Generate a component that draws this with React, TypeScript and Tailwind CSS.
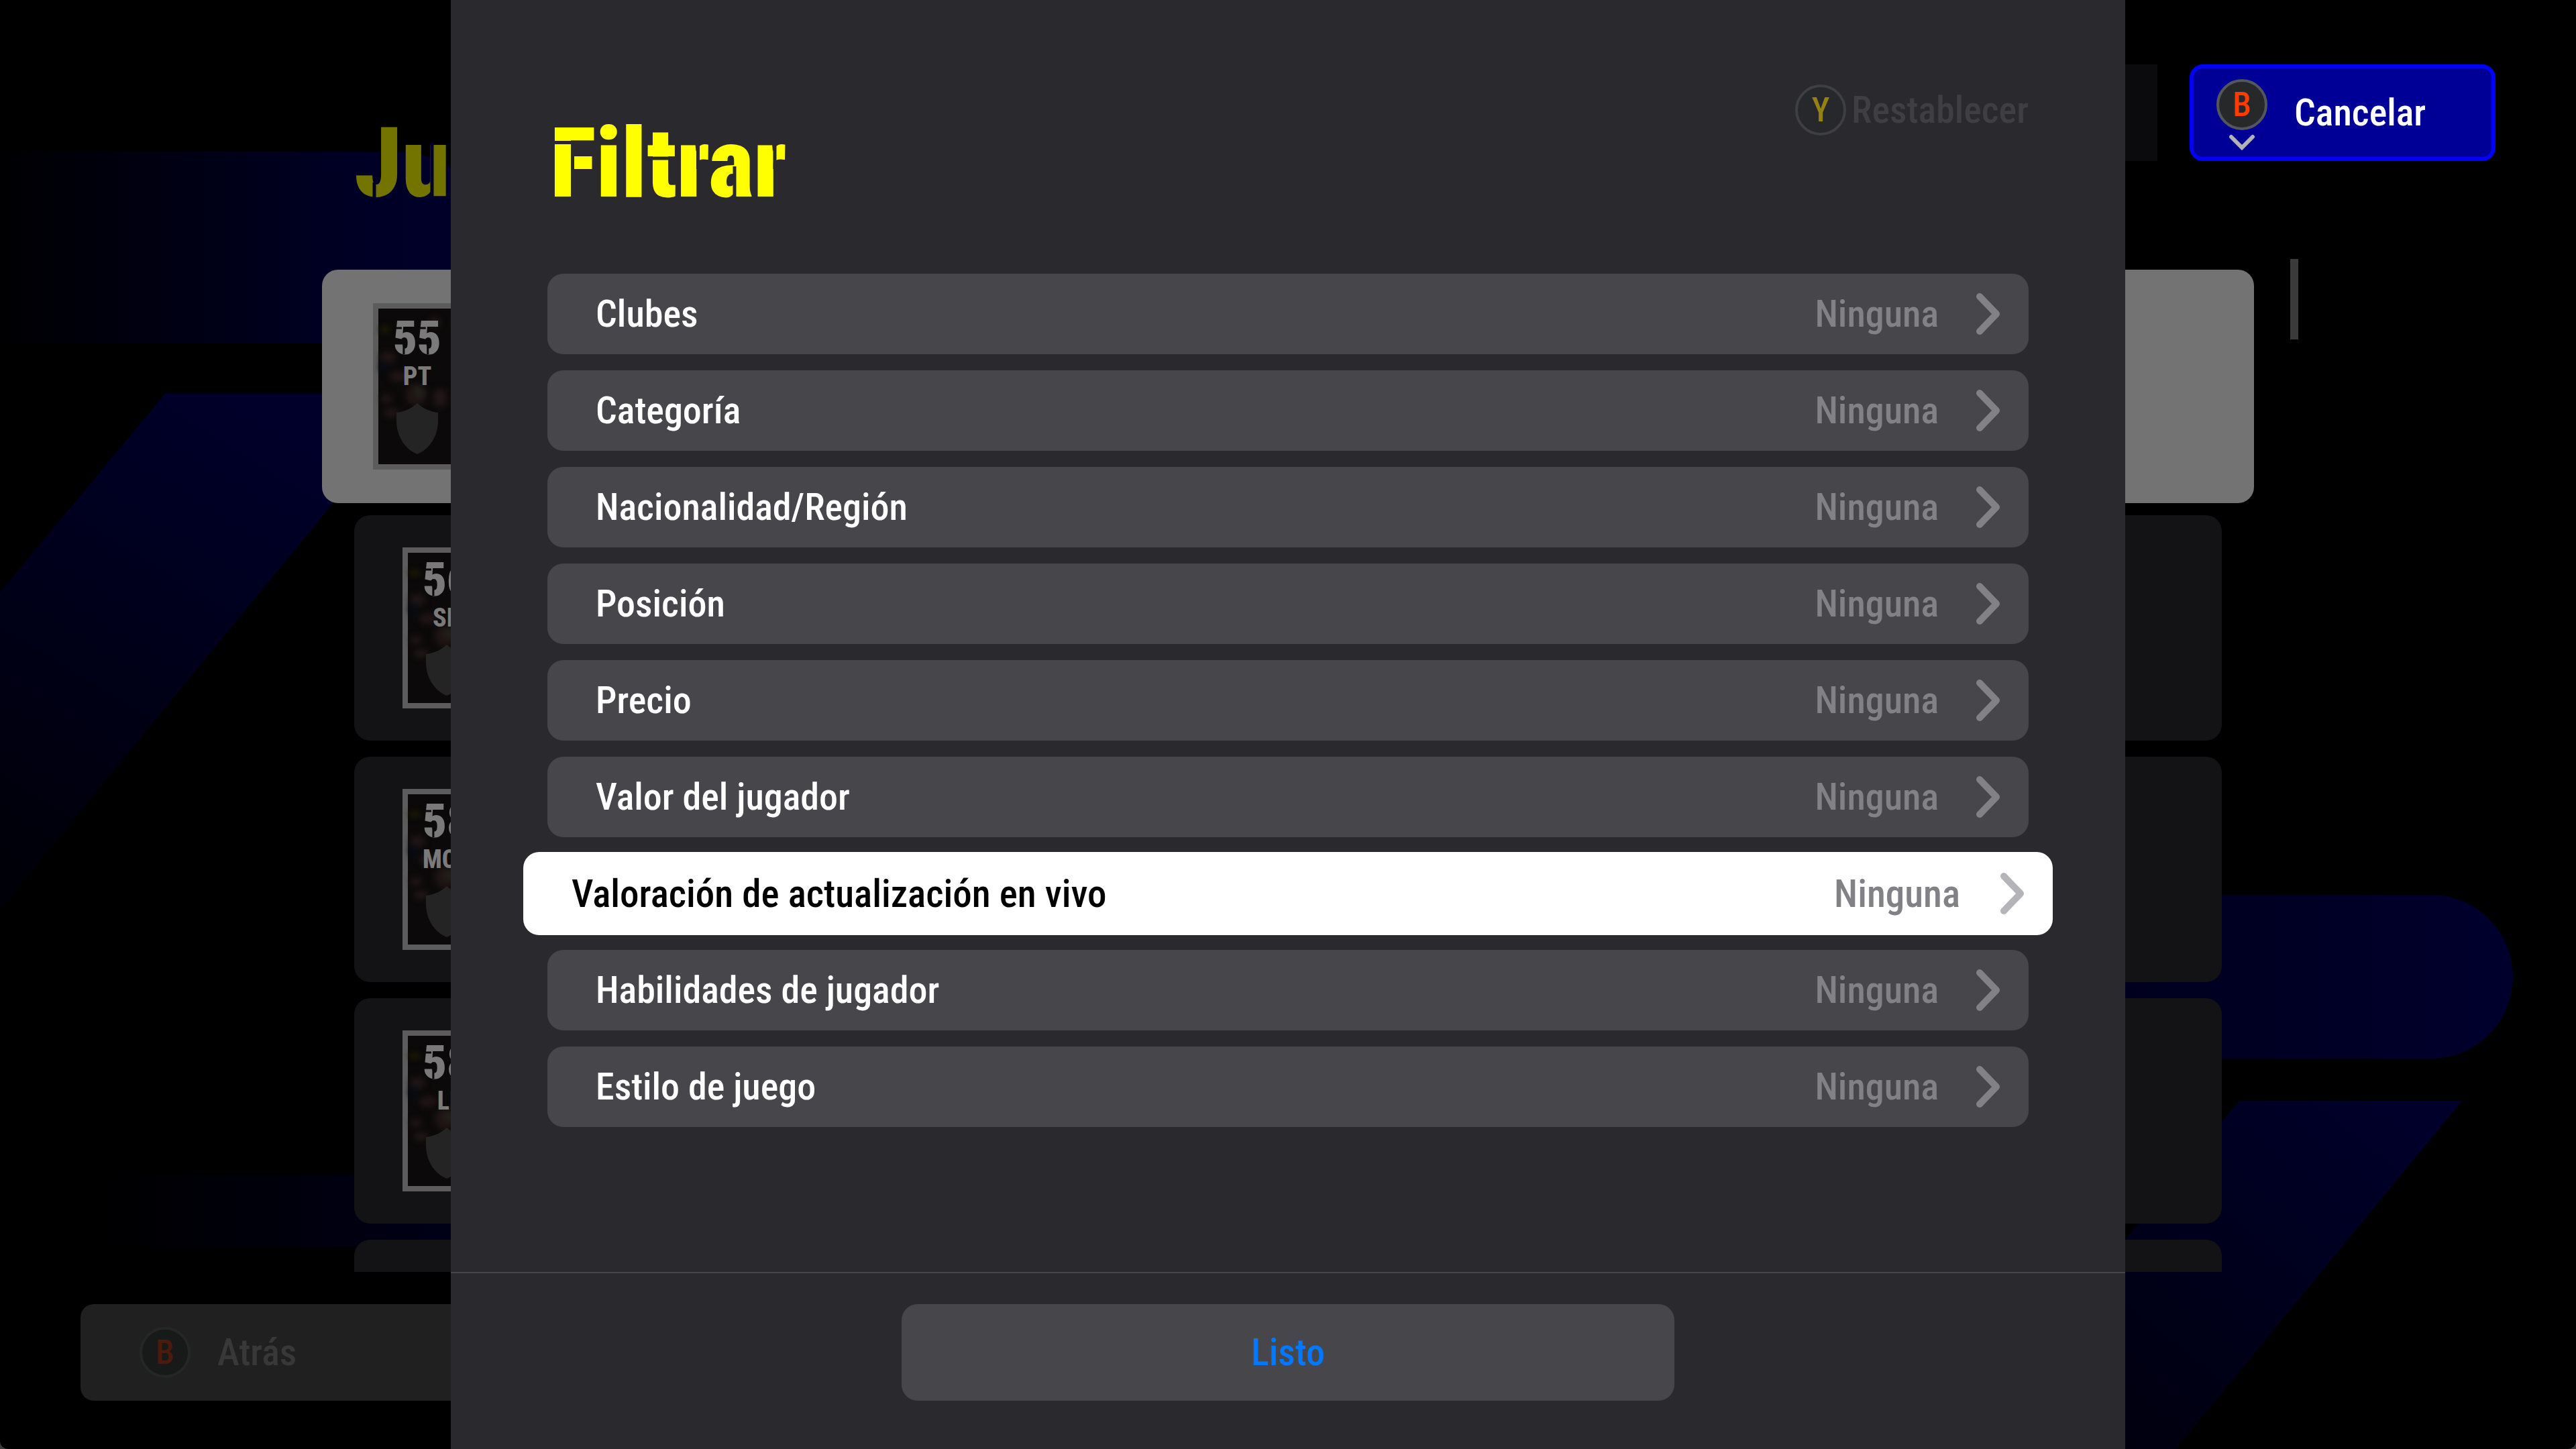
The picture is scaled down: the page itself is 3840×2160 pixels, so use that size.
import type { ReactNode } from "react";

type Filter = { label: string; value: string; selected?: boolean };
type Player = { rating: string; position: string; selected?: boolean };

const filters: Filter[] = [
  { label: "Clubes", value: "Ninguna" },
  { label: "Categoría", value: "Ninguna" },
  { label: "Nacionalidad/Región", value: "Ninguna" },
  { label: "Posición", value: "Ninguna" },
  { label: "Precio", value: "Ninguna" },
  { label: "Valor del jugador", value: "Ninguna" },
  { label: "Valoración de actualización en vivo", value: "Ninguna", selected: true },
  { label: "Habilidades de jugador", value: "Ninguna" },
  { label: "Estilo de juego", value: "Ninguna" },
];

const players: Player[] = [
  { rating: "55", position: "PT", selected: true },
  { rating: "56", position: "SD" },
  { rating: "58", position: "MCD" },
  { rating: "58", position: "LI" },
];

function Backdrop() {
  return (
    <svg
      aria-hidden="true"
      className="absolute inset-0 h-full w-full"
      viewBox="0 0 3840 2160"
      preserveAspectRatio="none"
    >
      <defs>
        <linearGradient id="bandTop" x1="0" x2="1" y1="0" y2="0">
          <stop offset="0" stopColor="#000002" />
          <stop offset="0.75" stopColor="#000026" />
          <stop offset="1" stopColor="#00002c" />
        </linearGradient>
        <linearGradient id="bandBottom" gradientUnits="userSpaceOnUse" x1="140" x2="1100" y1="0" y2="0">
          <stop offset="0" stopColor="#000000" />
          <stop offset="1" stopColor="#00002a" />
        </linearGradient>
        <linearGradient id="slantLeft" gradientUnits="userSpaceOnUse" x1="420" x2="0" y1="620" y2="1300">
          <stop offset="0" stopColor="#00002b" />
          <stop offset="1" stopColor="#000008" />
        </linearGradient>
        <linearGradient id="pillRight" gradientUnits="userSpaceOnUse" x1="3100" x2="3746" y1="0" y2="0">
          <stop offset="0" stopColor="#00001c" />
          <stop offset="1" stopColor="#00002d" />
        </linearGradient>
        <linearGradient id="slantRight" gradientUnits="userSpaceOnUse" x1="3560" x2="3160" y1="1660" y2="2160">
          <stop offset="0" stopColor="#00002a" />
          <stop offset="1" stopColor="#00000e" />
        </linearGradient>
      </defs>
      <path d="M0 226H592a143 143 0 0 1 0 286H0Z" fill="url(#bandTop)" />
      <path d="M247 586H631L0 1355V883Z" fill="url(#slantLeft)" />
      <path d="M140 1752H1000V1858H140Z" fill="url(#bandBottom)" />
      <path d="M3000 1334H3624a122 122 0 0 1 0 244H3000Z" fill="url(#pillRight)" />
      <path d="M3338 1641H3670L3243 2160H2911Z" fill="url(#slantRight)" />
    </svg>
  );
}

/* Thin gaps laid over heavy lettering to give it a stencil look. */
function StencilCuts({ d, box, tone }: { d: string; box: string; tone: string }) {
  return (
    <svg aria-hidden="true" className={`absolute top-0 left-0 h-full w-full ${tone}`} viewBox={box} preserveAspectRatio="xMinYMin meet" fill="none" stroke="currentColor">
      <path d={d} />
    </svg>
  );
}

function PadKey({ tone, children }: { tone: string; children: ReactNode }) {
  return (
    <span
      className={`flex size-19 shrink-0 items-center justify-center rounded-full border-4 text-[50px] leading-none font-medium ${tone}`}
    >
      {children}
    </span>
  );
}

function Shield() {
  return (
    <svg aria-hidden="true" className="mt-[26px] h-19 w-16" viewBox="0 0 64 76">
      <path d="M32 0C23 8 12 13 1 14V27C1 49 14 69 32 76C50 69 63 49 63 27V14C52 13 41 8 32 0Z" fill="#242424" />
    </svg>
  );
}

function CardArt({ player }: { player: Player }) {
  return (
    <div className="relative h-full w-[180px] border-8 border-[#5c5c5c] bg-[#0b0909]">
      <svg aria-hidden="true" className="absolute inset-0 h-full w-full blur-[4px]" viewBox="0 0 164 224" preserveAspectRatio="none">
        <g fill="#1f1514">
          <ellipse cx="14" cy="70" rx="12" ry="9" />
          <ellipse cx="30" cy="98" rx="14" ry="8" />
          <ellipse cx="56" cy="124" rx="16" ry="16" />
          <ellipse cx="12" cy="130" rx="9" ry="7" />
          <ellipse cx="92" cy="128" rx="11" ry="14" />
          <ellipse cx="84" cy="20" rx="10" ry="8" />
          <ellipse cx="20" cy="150" rx="12" ry="7" />
        </g>
        <ellipse cx="10" cy="30" rx="9" ry="5" fill="#191904" />
        <ellipse cx="62" cy="120" rx="8" ry="9" fill="#20201a" />
        <ellipse cx="8" cy="84" rx="7" ry="9" fill="#070b14" />
      </svg>
      <div className={`relative flex w-29 flex-col items-center text-[#7a7a7a] ${player.selected ? "pt-5" : "pt-4"}`}>
        <span className="relative text-[70px] leading-[48px] font-black">
          {player.rating}
          <StencilCuts
            box="0 0 72 48"
            tone="stroke-3 text-[#0b0909]"
            d={player.rating === "55" ? "M0 9H13M16 37V50M36 9H49M52 37V50" : "M0 9H13M16 37V50"}
          />
        </span>
        <span className="mt-[19px] text-[38px] leading-[28px] font-extrabold">{player.position}</span>
        <Shield />
      </div>
    </div>
  );
}

function PlayerRow({ player }: { player: Player }) {
  return player.selected ? (
    <li className="-my-1.5 h-[348px] shrink-0 rounded-3xl bg-[#737373] py-[50px] pl-19">
      <CardArt player={player} />
    </li>
  ) : (
    <li className="mx-12 h-84 shrink-0 rounded-3xl bg-[#131315] py-12 pl-18">
      <CardArt player={player} />
    </li>
  );
}

function FilterRow({ filter }: { filter: Filter }) {
  const box = filter.selected
    ? "-mx-9 -my-0.5 w-[calc(100%+72px)] h-31 bg-white text-black text-[57px]"
    : "w-full h-30 bg-[#47464b] text-white text-[56px]";
  return (
    <li>
      <button type="button" className={`flex items-center justify-between rounded-3xl pr-[42px] pl-18 leading-none font-medium ${box}`}>
        <span>{filter.label}</span>
        <span className={`flex items-center text-[#828286] ${filter.selected ? "gap-15" : "gap-14"}`}>
          {filter.value}
          <svg
            aria-hidden="true"
            className={filter.selected ? "h-16 w-9 text-[#b5b5b9]" : "h-16 w-9"}
            viewBox="0 0 36 64"
            fill="none"
            stroke="currentColor"
            strokeWidth="10"
            strokeLinecap="round"
            strokeLinejoin="round"
          >
            <path d="M5 6L30 32L5 58" />
          </svg>
        </span>
      </button>
    </li>
  );
}

export default function App() {
  return (
    <div className='h-screen bg-[#3b3c33] font-["Roboto_Condensed",Roboto,sans-serif]'>
      <div className="relative flex h-full flex-col overflow-hidden rounded-b-xl bg-black">
        <Backdrop />

        <header className="relative flex h-96 shrink-0 items-start justify-between pt-24 pr-30 pl-[528px]">
          <h2 className="relative mt-19 text-[144px] leading-[144px] font-black text-[#737300]">
            Ju
            <StencilCuts box="0 0 128 144" tone="stroke-5 text-[#00002a]" d="M30 100V126M116 40V126" />
          </h2>
          <div className="flex gap-12">
            <div className="h-36 w-72 bg-[#0b0b0d]" />
            <button
              type="button"
              className="flex h-36 w-114 items-start rounded-[20px] border-[6px] border-[#0000ff] bg-[#000096] pt-4 pl-[34px] text-[56px] font-medium text-white"
            >
              <span className="flex flex-col items-center gap-1.5">
                <PadKey tone="border-[#55565a] bg-[#26282a] text-[#ff3c00]">B</PadKey>
                <svg aria-hidden="true" className="h-6 w-10" viewBox="0 0 40 24" fill="none" stroke="#b3b3b3" strokeWidth="6" strokeLinecap="round">
                  <path d="M4 4L20 20L36 4" />
                </svg>
              </span>
              <span className="ml-10 leading-[100px]">Cancelar</span>
            </button>
          </div>
        </header>

        <main className="relative flex min-h-0 flex-1 items-start gap-[54px] pr-[414px] pl-[480px]">
          <ul className="flex h-full flex-1 flex-col gap-6 overflow-hidden pt-6">
            {players.map((player, i) => (
              <PlayerRow key={i} player={player} />
            ))}
            <li className="mx-12 h-84 shrink-0 rounded-3xl bg-[#131315]" />
          </ul>
          <div className="mt-0.5 h-30 w-3 bg-[#3a3a3a]" />
        </main>

        <footer className="relative shrink-0 px-30 pt-12 pb-18">
          <button
            type="button"
            className="flex h-36 w-[640px] items-center gap-10 rounded-[20px] bg-[#202020] pl-22 text-[56px] font-medium text-[#383838]"
          >
            <PadKey tone="border-[#252727] bg-[#181a1a] text-[#4d1b0d]">B</PadKey>
            Atrás
          </button>
        </footer>

        <section
          role="dialog"
          aria-modal="true"
          aria-labelledby="filter-title"
          className="absolute inset-y-0 left-1/2 flex w-[65%] -translate-x-1/2 flex-col bg-[#2a292e]"
        >
          <div className="flex items-start justify-between px-36 pt-31">
            <h1 id="filter-title" className="relative mt-12 ml-1 text-[144px] leading-[144px] font-black text-[#ffff00]">
              Filtrar
              <StencilCuts
                box="0 0 353 144"
                tone="stroke-5 text-[#2a292e]"
                d="M4 40.5H31M33.5 56V84M144 64H190M220.5 38V80M275 76V124M335 38V80"
              />
            </h1>
            <button type="button" disabled className="flex h-20 items-center gap-2 text-[56px] leading-none font-medium text-[#3f3e43]">
              <PadKey tone="border-[#3f3e43] bg-[#26282b] text-[#958212]">Y</PadKey>
              Restablecer
            </button>
          </div>
          <ul className="mt-[92px] flex flex-1 flex-col gap-6 px-36">
            {filters.map((filter) => (
              <FilterRow key={filter.label} filter={filter} />
            ))}
          </ul>
          <div className="flex justify-center border-t-2 border-[#47464b] pt-[46px] pb-18">
            <button type="button" className="h-36 w-[1152px] rounded-3xl bg-[#47464b] text-[56px] font-medium text-[#0078ff]">
              Listo
            </button>
          </div>
        </section>
      </div>
    </div>
  );
}
